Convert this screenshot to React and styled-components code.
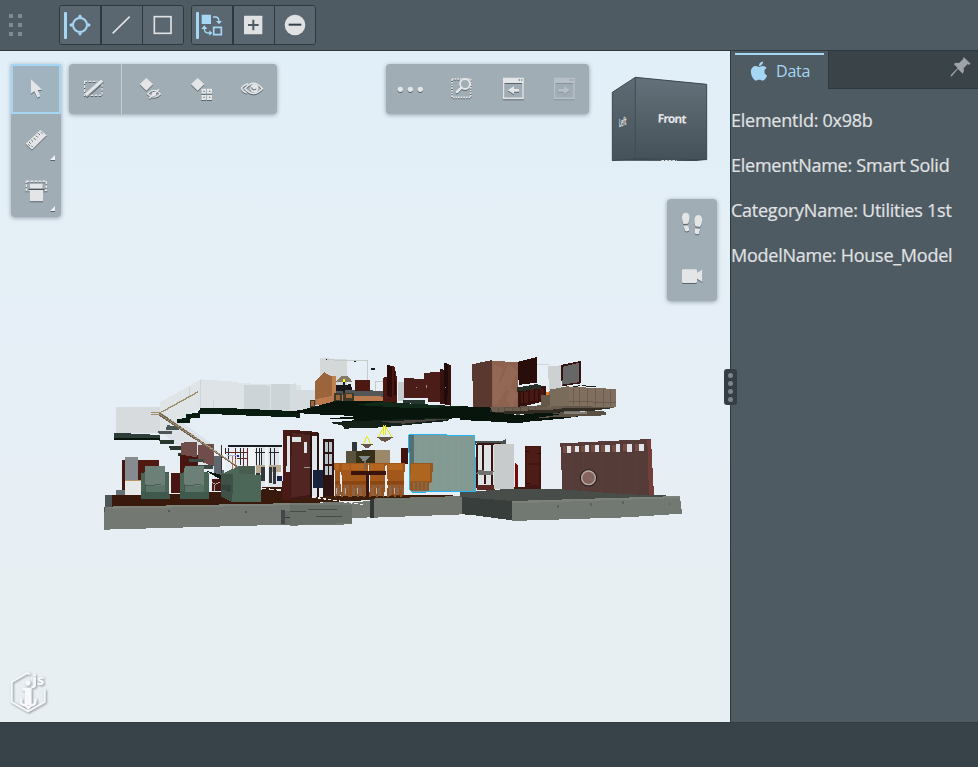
import React from "react";
import styled, { createGlobalStyle, css } from "styled-components";
import { FaApple } from "react-icons/fa";

const GlobalStyle = createGlobalStyle`
  * { box-sizing: border-box; }
  body { margin: 0; overflow: hidden; font-family: "Open Sans", "Noto Sans", sans-serif; }
`;

const accent = "#a5d7f5";
const light = "#dfe1e3";

const Page = styled.div`
  width: 978px;
  height: 767px;
  display: flex;
  flex-direction: column;
  background: #4f5b63;
  color: ${light};
`;

const Header = styled.header`
  height: 51px;
  flex: none;
  display: flex;
  align-items: flex-start;
  padding: 5px 0 0 9px;
  border-bottom: 1px solid #2f383d;
  background: #4f5b63;
`;

const DragHandle = styled.div`
  display: grid;
  grid-template-columns: 4px 4px;
  grid-auto-rows: 4px;
  gap: 5px;
  margin: 9px 37px 0 0;
  width: 13px;
`;

const HandleDot = styled.span`
  background: #818a90;
`;

const ButtonGroup = styled.div`
  display: flex;
  width: 125px;
  height: 40px;
  margin-right: 7px;
  border: 1px solid #2f383d;
  border-radius: 3px;
  overflow: hidden;
`;

const HeaderButton = styled.button`
  position: relative;
  width: 41px;
  height: 38px;
  padding: 0;
  border: 0;
  border-left: 1px solid #2f383d;
  background: #5b6770;
  display: flex;
  align-items: center;
  justify-content: center;
  color: ${(p) => (p.$active ? accent : light)};
  &:first-child { border-left: 0; border-right: 1px solid #2f383d; }
  ${(p) =>
    p.$active &&
    css`
      &::before {
        content: "";
        position: absolute;
        left: 4px;
        top: 6px;
        width: 3px;
        height: 27px;
        border-radius: 1px;
        background: ${accent};
      }
    `}
`;

const Body = styled.div`
  height: 671px;
  display: flex;
`;

const Viewport = styled.main`
  position: relative;
  width: 730px;
  height: 671px;
  overflow: hidden;
  background: linear-gradient(#e1eff8 0, #e4eff6 25%, #e6eef6 50%, #e8eff2 90%);
`;

const SceneSvg = styled.svg`
  position: absolute;
  inset: 0;
  width: 730px;
  height: 671px;
`;

const Overlay = styled.div`
  position: relative;
  height: 671px;
  padding: 13px 13px 0 11px;
  display: flex;
  align-items: flex-start;
`;

const Widget = styled.div`
  flex: none;
  display: flex;
  flex-direction: ${(p) => (p.$vertical ? "column" : "row")};
  gap: ${(p) => p.$gap || 0}px;
  width: ${(p) => p.$w}px;
  height: ${(p) => p.$h}px;
  margin-left: ${(p) => p.$left || 0}px;
  background: #a0adb5;
  border-radius: ${(p) => (p.$flatTop ? "0 0 4px 4px" : "4px")};
  box-shadow: 0 1px 4px rgba(50, 65, 80, 0.45);
`;

const ToolButton = styled.button`
  position: relative;
  flex: none;
  width: ${(p) => p.$w || 50}px;
  height: ${(p) => p.$h || 50}px;
  padding: 0;
  border: ${(p) => (p.$selected ? `2px solid ${accent}` : 0)};
  background: ${(p) => (p.$selected ? "#a2b3c0" : "transparent")};
  opacity: ${(p) => (p.$disabled ? 0.35 : 1)};
  color: #e3e5e6;
  display: flex;
  align-items: center;
  justify-content: center;
`;

const Expand = styled.i`
  position: absolute;
  right: 6px;
  bottom: 5px;
  border-left: 5px solid transparent;
  border-bottom: 5px solid #eef0f1;
  filter: drop-shadow(0 1px 0 #56616a);
`;

const Divider = styled.div`
  width: 1px;
  margin-right: 2px;
  background: #c6d0d6;
`;

const RightColumn = styled.div`
  margin-left: 23px;
  width: 105px;
  height: 237px;
  display: flex;
  flex-direction: column;
  justify-content: space-between;
  align-items: flex-end;
`;

const CubeSvg = styled.svg`
  display: block;
  width: 97px;
  height: 88px;
  margin: 12px 9px 0 0;
`;

const IconSvg = styled.svg`
  display: block;
  width: 26px;
  height: 26px;
  flex: none;
  overflow: visible;
  filter: ${(p) => (p.$flat ? "none" : "drop-shadow(0 1px 0 #59636b)")};
`;

const Logo = styled.svg`
  position: absolute;
  left: 0;
  bottom: -8px;
  width: 60px;
  height: 60px;
  filter: drop-shadow(1px 1px 1px rgba(60, 70, 80, 0.55));
`;

const Panel = styled.aside`
  position: relative;
  width: 248px;
  border-left: 1px solid #2f383d;
  background: #4f5b63;
`;

const TabBar = styled.div`
  display: flex;
  height: 38px;
`;

const Tab = styled.div`
  position: relative;
  width: 97px;
  display: flex;
  align-items: center;
  gap: 6px;
  padding: 2px 0 0 17px;
  color: ${accent};
  font-size: 16px;
  letter-spacing: -0.2px;
  &::before {
    content: "";
    position: absolute;
    left: 4px;
    right: 4px;
    top: 2px;
    height: 2px;
    background: ${accent};
  }
`;

const TabFill = styled.div`
  flex: 1;
  height: 38px;
  background: #394348;
  border-left: 1px solid #2f383d;
  border-bottom: 1px solid #2f383d;
  display: flex;
  justify-content: flex-end;
  padding: 6px 6px 0 0;
`;

const PinSvg = styled.svg`
  width: 22px;
  height: 22px;
`;

const Properties = styled.div`
  padding-top: 9px;
`;

const Property = styled.div`
  height: 45px;
  line-height: 45px;
  font-size: 18px;
  letter-spacing: -0.25px;
  white-space: nowrap;
  color: #e0e2e3;
  -webkit-text-stroke: 0.2px #e0e2e3;
`;

const Grip = styled.div`
  position: absolute;
  left: -7.5px;
  top: 318px;
  width: 13px;
  height: 36px;
  border-radius: 3px;
  background: #343e44;
  display: flex;
  flex-direction: column;
  align-items: center;
  justify-content: center;
  gap: 3px;
`;

const GripDot = styled.span`
  width: 5px;
  height: 5px;
  border-radius: 50%;
  background: #7b868c;
`;

const Footer = styled.footer`
  height: 45px;
  background: #384349;
  border-top: 1px solid #323c41;
`;

/* Icons are drawn round the origin, three units to a pixel. */
const Icon = ({ children, flat }) => (
  <IconSvg viewBox="-39 -39 78 78" $flat={flat} fill="currentColor">
    {children}
  </IconSvg>
);

const s = (width = 5) => ({ fill: "none", stroke: "currentColor", strokeWidth: width });

const SnapIcon = () => (
  <Icon flat>
    <circle r="21" {...s(6)} />
    <path d="M-31-3l8-3v12l-8-3zM31-3l-8-3v12l8-3zM-3-31l-3 8h12l-3-8zM-3 31l-3-8h12l-3 8z" />
  </Icon>
);
const LineIcon = () => <Icon><path d="M-28 25L23-25" {...s(5)} /></Icon>;
const SquareIcon = () => <Icon><rect x="-26" y="-25" width="50" height="50" {...s(5)} /></Icon>;
const ReplaceIcon = () => (
  <Icon flat>
    <path d="M-31-31h28v28h-28z" />
    <path d="M5 7h23v22h-23z" {...s(5)} />
    <path d="M3-24h7q11 0 11 14v4M-23 6v5q0 13 13 13h8" {...s(4)} />
    <path d="M12-12h18l-9 10zM-32 12h18l-9-11zM-8 16l9 8-9 8z" />
  </Icon>
);
const PlusIcon = () => (
  <Icon>
    <rect x="-30" y="-28" width="55" height="56" rx="2" />
    <path d="M-2-16v32M-18 0h32" stroke="#4f5b63" strokeWidth="6" />
  </Icon>
);
const MinusIcon = () => (
  <Icon>
    <circle r="31" />
    <path d="M-19-1h38" stroke="#343e44" strokeWidth="6" />
  </Icon>
);
const CursorIcon = () => <Icon><path d="M-15-29v43l10-7 9 19 9-4-8-18 13-2z" /></Icon>;
const RulerIcon = () => (
  <Icon>
    <path d="M-31 11l44-41 19 16-44 43z" />
    <path d="M-21 6l5 5M-14 0l5 5M-7-6l6 6M0-13l5 5M7-20l5 5M15-23l4 4M-23 13l4 4M-14 17l4 4" stroke="#59636b" strokeWidth="3" />
  </Icon>
);
const SectionIcon = () => (
  <Icon>
    <path d="M-29-29h60v27h-60z" {...s(5)} strokeDasharray="9 3" />
    <path d="M-18-22h38v15h-38zM-19-3h40v34h-40z" />
    <path d="M-23-5h49" stroke="#3e484f" strokeWidth="3" />
  </Icon>
);
const ClearIcon = () => (
  <Icon>
    <path d="M-31-23h52v42h-52z" {...s(4)} strokeDasharray="8 4" />
    <path d="M-28 20L20-25" stroke="#a0adb5" strokeWidth="14" />
    <path d="M-24 22L25-20" stroke="#6d7880" strokeWidth="3" />
    <path d="M-28 18L21-25" {...s(9)} />
  </Icon>
);
const HideIcon = () => (
  <Icon>
    <path d="M-31-14l20-19 20 19-20 19z" />
    <path d="M-7 15q18-22 38 0q-19 19-38 0z" {...s(4)} />
    <circle cx="12" cy="15" r="7" />
    <path d="M-3 28L27 1" {...s(5)} />
  </Icon>
);
const IsolateIcon = () => (
  <Icon>
    <path d="M-30-14l20-19 20 19-20 19z" />
    <path d="M1-1h15v15H1zM18-1h15v15H18zM1 18h15v15H1zM18 18h15v15H18z" />
    <path d="M7 5h4v4H7zM24 5h4v4h-4zM7 23h4v4H7zM24 23h4v4h-4z" fill="#76828a" />
  </Icon>
);
const EyeIcon = () => (
  <Icon>
    <path d="M-21-1q25-32 52 0q-27 29-52 0zM-12-16q-36 14-4 28" {...s(5)} />
    <circle cx="7" cy="-2" r="13" />
    <path d="M-1-5q1 12 14 5" fill="none" stroke="#59636b" strokeWidth="3" />
  </Icon>
);
const MoreIcon = () => (
  <Icon><circle cx="-32" cy="1" r="8" /><circle cx="-2" cy="1" r="8" /><circle cx="28" cy="1" r="8" /></Icon>
);
const WindowAreaIcon = () => (
  <Icon>
    <path d="M-30-30h56v55h-56z" {...s(5)} strokeDasharray="5 3" />
    <circle cx="9" cy="-15" r="15" fill="#a0adb5" stroke="currentColor" strokeWidth="6" />
    <path d="M-2-4L-15 9" {...s(8)} strokeLinecap="round" />
  </Icon>
);
const ViewIcon = ({ forward }) => (
  <Icon>
    <path d="M-30-33h62v15h-62z" />
    <path d="M-28-31h58v59h-58z" {...s(5)} />
    <path d="M17-27h4M24-27h4" stroke="#76828a" strokeWidth="4" />
    <path d={forward ? "M-17 0h17v-9l17 13-17 12V8h-17z" : "M18 0H3v-9L-16 4 3 16V8h15z"} />
  </Icon>
);
const WalkIcon = () => (
  <Icon>
    <path d="M-20-37q12-1 13 14q0 11-5 19l-14 1q-5-13-4-22q1-11 10-12zM-25 3l14-1 3 14q-5 5-13 2zM20-30q11 2 11 16q-1 12-7 20l-14-2q-4-12-3-20q2-14 13-14zM9 11l15 2-3 14q-9 3-13-3z" />
  </Icon>
);
const CameraIcon = () => <Icon><path d="M-27-20h38q4 0 4 4v6L31-19v37L15 8v9q0 4-4 4h-38q-3 0-3-4v-33q0-4 3-4z" /></Icon>;

const Chair = ({ x, y = 0 }) => (
  <g transform={`translate(${x} ${y})`}>
    <path d="M3 22l13-4h70l3 82H3z" fill="#40594d" />
    <path d="M16 0h58v51l11 7v20H18V53h-6z" fill="#6c8078" />
    <path d="M18 58q24 6 56-1v22H18z" fill="#5c736a" />
    <path d="M3 22h12v54H3zM74 22h14v55H74z" fill="#4a6556" />
    <path d="M18 58l16 1 15-3h15" fill="none" stroke="#354d43" strokeWidth="2" />
  </g>
);

const DiningChair = ({ x, w = 52 }) => (
  <g transform={`translate(${x} 339)`}>
    <path d={`M4 55h${w - 8}v44H4z`} fill="#6b3410" opacity=".75" />
    <path d={`M0 0h${w}l-3 55H4z`} fill="#a2581b" />
    <path d={`M4 2h${w - 9}v20H4z`} fill="#b4651f" />
    <path d={`M3 54h${w - 6}v13H3z`} fill="#8a4712" />
    {[7, 17, 28, 38, 47].filter((v) => v < w - 3).map((v, i) => (
      <path key={v} d={`M${v} 62l${i % 2 ? 3 : -3} ${i % 2 ? 34 : 40}`} stroke="#98531d" strokeWidth="5" />
    ))}
    <path d={`M${w / 2 - 3} 74v20`} stroke="#b9b3a6" strokeWidth="3" />
  </g>
);

const WestWing = () => (
  <g transform="translate(100 350) scale(.33333)" shapeRendering="crispEdges">
    <path d="M183 168l120-80 78 5 50 7 171 5v80l-225-11h-76l-22 12-28 14-20 18H183z" fill="#dde3e6" />
    <path d="M48 170h135v80H48z" fill="#d7dbde" />
    <path d="M181 156v91l108-70 14-89z" fill="#dfe4e7" />
    <path d="M183 245l58-32 100 72v70l-40-7z" fill="#d9dfe3" opacity=".8" />
    <path d="M431 104l80 3v78h-80zM512 101l76 2v85h-76z" fill="#cdd4d7" />
    <path d="M303 90v84M340 150v24M268 110v38" stroke="#c5ccd0" strokeWidth="2" />
    <path d="M43 248l136 7v13l-136 1z" fill="#2e3d3a" />
    <path d="M43 264h138v6H43z" fill="#07140c" />
    <path d="M301 174h77l222 10v19l-298-12-3 12-27 1-3 14-37 1v-11l25-4 2-12 34-3z" fill="#081c10" />
    <path d="M202 226l35 2v11h-40zM174 244h42v9h-38z" fill="#4b5755" />
    <path d="M178 270h44v11h-41zM207 289h43v11h-40zM234 309h42v10h-40z" fill="#28372e" />

    <path d="M67 331h47v61l-22 4-18 35H67z" fill="#451512" />
    <path d="M74 321h40v70H74z" fill="#858b8e" />
    <path d="M114 331h62v85h-62z" fill="#501912" />
    <path d="M75 393h47v41H75z" fill="#e6e9e8" />
    <path d="M75 391h50" stroke="#b79869" strokeWidth="4" />
    <path d="M48 419h26v15H48z" fill="#667077" />
    <path d="M214 370h29v58h-29zM241 314h54v114h-54z" fill="#481510" />
    <path d="M244 280l12-4h34v46l-46-8zM294 284l48-2v68l-47-18z" fill="#704c4b" />
    <path d="M212 357h29v13h-29z" fill="#e9eef0" />
    <path d="M342 318h30v58h-30z" fill="#5e686e" />
    <path d="M268 328h43v7h-43zM290 346h48v10h-48z" fill="#3c4b45" />
    <path d="M337 387h27v36h-27z" fill="#481510" />
    <path d="M337 397l10 6 12-6M343 405v18" fill="none" stroke="#aeb3b0" strokeWidth="3" />

    <path d="M362 288h183v124H483V294z" fill="#dee6ec" />
    <path d="M384 285h162v5H384z" fill="#191c20" />
    <path d="M362 286h5v90h-5z" fill="#30363b" />
    <path d="M367 291h8v70h-8zM446 291h19v110h-19zM495 290h9v119h-9zM537 290h8v90h-8z" fill="#f1f3f5" />
    <path d="M378 295v16M387 293v36M422 293v52M469 294v58M478 294v58M485 294v58M513 294v58M525 294v58M466 309h29M506 309h30" stroke="#25272c" strokeWidth="3" />
    <path d="M407 293v60M432 294v61M443 294v61M375 308h70M410 325h35" stroke="#612920" strokeWidth="3" fill="none" />
    <path d="M398 318v57M407 328v45" stroke="#b06c56" strokeWidth="4" />
    <path d="M469 346h26v22h-26zM507 346h36v20h-36z" fill="#b7aa91" />
    <path d="M469 368h11v28h-11zM484 352h11v42h-11zM508 352h8v48h-8zM518 352h10v50h-10z" fill="#33373c" />
    <path d="M381 315h34v4h-34z" fill="#aeb8c8" />
    <path d="M410 314h7v7h-7z" fill="#1b20d7" />
    <path d="M178 188l240 166M179 195l224 149" stroke="#746452" strokeWidth="5" />
    <path d="M178 186l240 166M179 193l224 149" stroke="#c6b896" strokeWidth="2" strokeDasharray="4 2" />
    <path d="M185 186l110-61M152 187h30M152 193h30" stroke="#a08d6b" strokeWidth="4" />

    <path d="M37 434l80 2 368-16v-8h62l50 8v55L37 471z" fill="#38190c" />
    <path d="M15 434h21v37l-4 30-20 3V470h4z" fill="#4e5554" />
    <path d="M14 470l586-11v64L12 539z" fill="#737872" />
    <path d="M15 470l585-11v6L38 476z" fill="#7d827b" />
    <path d="M544 482h60v42h-60z" fill="#656b64" />
    <path d="M544 480h12v42h-12z" fill="#41474a" />
    <path d="M556 502h44" stroke="#343a37" strokeWidth="3" />
    <path d="M205 480h6v6h-6zM435 484h6v6h-6z" fill="#505852" />
    <Chair x={120} y={348} />
    <Chair x={238} y={348} />
    <path d="M317 362l47 28v-15z" fill="#0a1710" />
    <path d="M363 371l13-4 41-19h49v26h17v81H395l-32-16z" fill="#4c6657" />
    <path d="M363 371l36 2-2 82-34-16z" fill="#3d5146" />
    <path d="M417 348h49v25h-49z" fill="#465d50" />
    <path d="M367 404l27 3-3 20-26-10z" fill="#35433e" />
    <path d="M549 240h51v211h-53z" fill="#4a1a17" />
    <path d="M562 258h12v108h-15zM576 258h24v16h-24z" fill="#dce4e8" />
    <path d="M485 415l62 6" stroke="#eee" strokeWidth="4" strokeDasharray="14 8" />
    <path d="M530 377h17v15h-17z" fill="#142346" />
  </g>
);

const CentreWing = () => (
  <g transform="translate(290 350) scale(.33333)" shapeRendering="crispEdges">
    <path d="M0 103l18-3v20l65-1v54l-83 9z" fill="#d5dcdf" />
    <path d="M90 24l81 4v85l-81-3z" fill="#d4d8d9" />
    <path d="M108 28l60 5h65v92M256 127V95h25" fill="none" stroke="#c5cacb" strokeWidth="3" />
    <path d="M107 26h5v5h-5zM191 33h7v4h-7zM243 54h12v6h-12z" fill="#171b20" />
    <path d="M139 116h46v4h47l63 6v16l-155-4z" fill="#535657" />
    <path d="M137 106l45-3 5 17-48 3z" fill="#19151c" />
    <path d="M195 90h44v33h-44z" fill="#4b1812" />
    <path d="M75 94l18-16 9-12 19 12 17-1v72l-62 15z" fill="#9b643a" />
    <path d="M125 77h13v72l-10 3z" fill="#c08150" />
    <path d="M76 148l61-13 66 2 110 4v15l-234 9z" fill="#bc7b4e" />
    <path d="M60 150h15v24H60zM132 130h25v25h-25zM160 129h33v24h-33z" fill="#3f3929" />
    <path d="M64 154h7v14h-7zM138 136h13v13h-13zM169 133h16v11h-16z" fill="#a0683c" />
    <path d="M154 78h20l13 18h-49z" fill="#867a6b" />
    <path d="M160 97h6v31h-6z" fill="#171a14" /><path d="M160 88h5v8h-5z" fill="#ff0" />
    <path d="M279 83l14-3V45l20 4 8 34v75l-42-3z" fill="#4a1813" />
    <path d="M292 44l14 5v92l-14-2zM313 53l7 80-8 8z" fill="#2c0a08" />
    <path d="M323 95h20v57h-20z" fill="#c6cbcd" />
    <path d="M342 84l61 3V69l57-5v92h-45v-12h-73z" fill="#4a1d19" />
    <path d="M451 57l14 3V38l18 8v121l-33-6z" fill="#371310" />
    <path d="M462 38l13 5-3 118-9-1z" fill="#210b0a" />
    <path d="M379 110v4M411 105v8M464 112h4" stroke="#a09170" strokeWidth="3" />
    <path d="M338 150l67 1v12l-67-4z" fill="#26372f" />
    <path d="M546 45l54-12v138h-50z" fill="#5b3f39" />

    <path d="M0 184l32-4 53-13 54-15 119 1 180 14 130 8 52-4v31l-122 3-204 10-36 2H128l-9-12 90-7-95-3-114-7z" fill="#07150d" />
    <path d="M60 205l150 4-90 9-58-6z" fill="#e6eef6" />
    <path d="M118 218l176-9 189-6-9 10-92 9-104 10-115 4-7-10z" fill="#152219" />
    <path d="M267 215l171-8h47l-145 14z" fill="#4b4540" />
    <path d="M264 155l280 16-187 3-160-9z" fill="#102919" />

    <path d="M0 241l57 2 29 5v197L0 450z" fill="#401916" />
    <path d="M6 249l54 7v179l-58 8z" fill="#512522" />
    <path d="M6 262h28v13h17v35h-8v-34H6z" fill="#dce3e7" />
    <path d="M67 257h15v183H67z" fill="#dfe6eb" />
    <path d="M61 248h6v194h-6zM81 248h5v194h-5z" fill="#28100d" />
    <path d="M99 267h33v178H99z" fill="#2c1311" />
    <path d="M106 276h8v31h-8zM118 276h8v31h-8zM106 313h8v28h-8zM118 313h8v28h-8zM106 348h8v27h-8zM118 348h8v27h-8z" fill="#bac4cd" />
    <path d="M68 359h31v54H68z" fill="#18243b" />
    <path d="M42 353h18" stroke="#9a9c9b" strokeWidth="3" />
    <path d="M333 294h21v48h-21z" fill="#40130f" />
    <path d="M168 303h57v38h-57z" fill="#59523c" />
    <path d="M225 300h75v44h-75z" fill="#9b876a" />
    <path d="M198 304l28-4h29v40h-57z" fill="#373018" />
    <path d="M186 276h15v26h-15z" fill="#30363a" />
    <path d="M0 449l132-12 358-1v12L245 450 0 462z" fill="#3c1c0b" />
    <path d="M0 460l240-6v48l-54 3v18l-86 2-100 2z" fill="#747972" />
    <path d="M0 465h186v54L0 525z" fill="#686e68" />
    <path d="M0 486h47M55 478h87M78 499h79" stroke="#343a37" strokeWidth="2" />
    <path d="M240 446l280-8v55l-268 10h-12z" fill="#727870" />
    <path d="M240 448h12v55h-12z" fill="#303735" />
    <path d="M516 440l84 15v43l-84-5z" fill="#3b413e" />
    <path d="M67 441l78 12 75 11" fill="none" stroke="#eee" strokeWidth="4" strokeDasharray="10 6" />
    <DiningChair x={132} w={21} /><DiningChair x={152} w={34} />
    <DiningChair x={178} w={56} /><DiningChair x={236} w={51} />
    <DiningChair x={289} w={56} />
    <path d="M183 362h106v13H183zM228 375h9v65h-9z" fill="#39130d" />
    <path d="M207 318h33l-13 15h-9z" fill="#818a89" /><path d="M222 333h6v25h-6z" fill="#72675c" />
    <path d="M283 228l-17 33M287 228l17 33M281 226v30M288 226v30M229 262l-8 20M233 262l9 20M231 258v6" fill="none" stroke="#e8e900" strokeWidth="3" />
    <path d="M261 262h48l-15 10-8 4-11-4zM213 283h36l-14 10h-9z" fill="#66564a" />
    <path d="M356 254h115l83 4v61l3 3v102H410l-1 3-45-1-4-7V308h-5z" fill="#829a91" />
    <path d="M357 254h15v86h-15z" fill="#526f72" />
    <path d="M360 339h69l-3 56-8 5v20h-58z" fill="#96571f" />
    <path d="M364 341h55v53h-59z" fill="#ad651f" />
    <path d="M362 396h56v26h-56z" fill="#7d6b4c" />
    <path d="M365 397v24M377 397v22M390 397v24M402 397v22M413 397v24" stroke="#9e5219" strokeWidth="6" />
    <path d="M390 257v78M408 257v78M440 257v163M462 257v163M485 257v163M507 257v163M530 257v163" stroke="#92a69b" strokeWidth="2" opacity=".4" />
    <path d="M356 254h115v3h83v64l3 3v100H410l-1 3-45-1-4-7V307h-4z" fill="none" stroke="#23b5f4" strokeWidth="3" />
  </g>
);

const EastWing = () => (
  <g transform="translate(460 350) scale(.33333)" shapeRendering="crispEdges">
    <path d="M36 43l60-13v142l-55-1z" fill="#59382f" />
    <path d="M95 32l80 5v141l-80-6z" fill="#8d6350" />
    <path d="M98 43l31 12-11 36 20 27-26 44-14 3zM146 43l28 22-23 44 23 30-19 32-17-23 9-24-24-29z" fill="#a0735e" opacity=".35" />
    <path d="M174 35l57-14v77l-55 7z" fill="#280d0a" />
    <path d="M231 43h37M248 45h19" stroke="#d0d5d7" strokeWidth="3" />
    <path d="M265 49l39-3v75h-38z" fill="#cdd1d1" />
    <path d="M303 45l60-12v67l-58 9z" fill="#351310" />
    <path d="M309 50l47-11v58l-49 7z" fill="#666766" />
    <path d="M172 111l85-3v45l-83 20z" fill="#35110e" />
    <path d="M183 126h20v33h-20zM211 121h24v31h-24zM239 117h14v29h-14z" fill="#4a1814" />
    <path d="M192 126v35M223 121v31" stroke="#260b09" strokeWidth="3" />
    <path d="M171 113l60-11 15 6-4 8-71 9z" fill="#292e27" />
    <path d="M98 174l144-8 110-2 115 9-110 10-184 11-76-7z" fill="#5f5449" />
    <path d="M42 186l55-8 155-1 146-4-45 10-155 10-91 1z" fill="#322c24" />
    <path d="M0 169l89 2v15l88 9 102-10h118v8l-88 13-115 10-15 4-95-6-84-4z" fill="#07150d" />
    <path d="M90 171l84 3 90-12 66 2-40 14-193 8z" fill="#6b5d4f" />
    <path d="M115 174v11M135 174v11M158 174v11M182 172v11M205 170v10M228 167v11" stroke="#51443a" strokeWidth="2" />
    <path d="M160 188l170-13 138-2-75 10-130 6z" fill="#322c24" />
    <path d="M327 110l140 7v55l-142-5z" fill="#806f5f" />
    <path d="M269 119l58-11v59l-63 3z" fill="#796c5a" />
    <path d="M244 136l26-4v36l-29 6z" fill="#655848" />
    <path d="M340 113v52M358 113v52M382 113v52M407 115v52M430 116v52M451 117v52M327 153l140 6" stroke="#62534a" strokeWidth="2" />
    <path d="M266 189l145-6 26 2v11l-127 5-82 3 73-11z" fill="#5b5044" />
    <path d="M311 184h70v8h-70z" fill="#aeb0ae" opacity=".5" />
    <path d="M367 107l40 4M340 110l20-3" fill="none" stroke="#24211d" strokeWidth="3" />
    <path d="M258 127h8v7h-8z" fill="#e17a20" />

    <path d="M45 272h82l12-5v17H45z" fill="#48514e" />
    <path d="M48 280h55v137H48z" fill="#dee3e6" />
    <path d="M51 281v133M70 280v84M76 369v34M96 280v125M52 282h70M50 409h53" fill="none" stroke="#38130f" strokeWidth="5" />
    <path d="M48 373l8-13 45 4-4 12z" fill="#70716c" /><path d="M52 405h52v14H52z" fill="#5b2921" />
    <path d="M162 411h35v8h-35z" fill="#3c1c0b" />
    <path d="M102 281h60v136h-60z" fill="#c7cbcc" />
    <path d="M166 340l8 5v66h-8z" fill="#7b0707" />
    <path d="M195 287h48v130h-47z" fill="#441613" />
    <path d="M202 291h36v48h-36zM202 345h36v60h-36z" fill="#4e1c17" />
    <path d="M196 306h10M232 310h11M199 402h10" stroke="#240e0c" strokeWidth="3" />
    <path d="M301 280l271-13 4 168H308z" fill="#573b39" />
    <path d="M562 269h11l9 165-15 1z" fill="#743f38" />
    <path d="M304 307h257v124H308z" fill="#563c39" />
    {[310, 334, 364, 394, 424, 456, 490, 526].map((x, i) => (
      <g key={x}>
        <path d={`M${x} ${289 - i}h${18 + i}v${19 + i * .4}h-${18 + i}z`} fill="#754d45" />
        <path d={`M${x + 11} ${288 - i}h${12 + i * .5}v${20 + i * .5}h-${12 + i * .5}z`} fill="#dfe5e8" />
      </g>
    ))}
    <path d="M337 313v112M372 313v118M426 313v118M483 313v118M530 313v118" stroke="#62433f" strokeWidth="2" opacity=".4" />
    <g shapeRendering="auto">
      <circle cx="385.5" cy="383.5" r="24" fill="#83645f" stroke="#271f20" strokeWidth="4" />
      <circle cx="385.5" cy="383.5" r="20.5" fill="none" stroke="#bba9a3" strokeWidth="4" />
    </g>
    <path d="M0 427l141-10 168 1 174 14 178 6-1 4-503 13L0 442z" fill="#484d49" />
    <path d="M6 441l151 12-1 58-60-8-90-12z" fill="#383e3b" />
    <path d="M156 453l504-15 6 53-166 11-344 11z" fill="#727872" />
    <path d="M156 453l504-15v6L158 460z" fill="#7c817a" />
    <path d="M291 466h6v7h-6zM389 460h6v7h-6zM486 454h6v7h-6zM626 459h5v6h-5z" fill="#5b625d" />
    <path d="M0 256h44v62l3 3v104H0z" fill="#829a91" />
    <path d="M0 256h44v64l3 3v102H0" fill="none" stroke="#23b5f4" strokeWidth="3" />
  </g>
);

const Scene = () => (
  <SceneSvg viewBox="0 51 730 671">
    <WestWing />
    <CentreWing />
    <EastWing />
  </SceneSvg>
);

const ViewCube = () => (
  <CubeSvg viewBox="723 78 291 264">
    <defs>
      <linearGradient id="cubeFront" x2="0" y2="1"><stop stopColor="#64717a" /><stop offset="1" stopColor="#455158" /></linearGradient>
      <linearGradient id="cubeLeft" x2="0" y2="1"><stop stopColor="#5e6b74" /><stop offset="1" stopColor="#465259" /></linearGradient>
    </defs>
    <path d="M727 127l69-45v246l-69 4z" fill="url(#cubeLeft)" />
    <path d="M796 82l214 21v227l-214-3z" fill="url(#cubeFront)" />
    <path d="M727 332l69-6 214 3-30 4z" fill="#3e4a51" />
    <path d="M727 127l69-45 214 21v226l-214-3-69 6zM796 82v244" fill="none" stroke="#3c474e" strokeWidth="3" />
    <text x="863" y="219" fontFamily="Open Sans" fontWeight="700" fontSize="36" textLength="87" fill="#e4e6e8" transform="rotate(2 906 207)">Front</text>
    <text transform="translate(747 232) skewY(-20) scale(.33 1)" fontFamily="Open Sans" fontWeight="700" fontSize="34" fill="#e4e6e8">Left</text>
    <path d="M874 332h46" stroke="#e3e6e8" strokeWidth="4" strokeDasharray="8 3" />
  </CubeSvg>
);

const properties = [
  ["ElementId", "0x98b"],
  ["ElementName", "Smart Solid"],
  ["CategoryName", "Utilities 1st"],
  ["ModelName", "House_Model"],
];

export default function App() {
  return (
    <Page>
      <GlobalStyle />
      <Header>
        <DragHandle>{[0, 1, 2, 3, 4, 5].map((i) => <HandleDot key={i} />)}</DragHandle>
        <ButtonGroup>
          <HeaderButton $active><SnapIcon /></HeaderButton>
          <HeaderButton><LineIcon /></HeaderButton>
          <HeaderButton><SquareIcon /></HeaderButton>
        </ButtonGroup>
        <ButtonGroup>
          <HeaderButton $active><ReplaceIcon /></HeaderButton>
          <HeaderButton><PlusIcon /></HeaderButton>
          <HeaderButton><MinusIcon /></HeaderButton>
        </ButtonGroup>
      </Header>
      <Body>
        <Viewport>
          <Scene />
          <Overlay>
            <Widget $vertical $gap={1} $w={50} $h={153} $flatTop>
              <ToolButton $selected><CursorIcon /></ToolButton>
              <ToolButton><RulerIcon /><Expand /></ToolButton>
              <ToolButton><SectionIcon /><Expand /></ToolButton>
            </Widget>
            <Widget $w={208} $h={50} $left={8}>
              <ToolButton $w={52}><ClearIcon /></ToolButton>
              <Divider />
              <ToolButton $w={51}><HideIcon /></ToolButton>
              <ToolButton $w={51}><IsolateIcon /></ToolButton>
              <ToolButton $w={51}><EyeIcon /></ToolButton>
            </Widget>
            <Widget $w={203} $h={50} $gap={1} $left={109}>
              <ToolButton><MoreIcon /></ToolButton>
              <ToolButton><WindowAreaIcon /></ToolButton>
              <ToolButton><ViewIcon /></ToolButton>
              <ToolButton $disabled><ViewIcon forward /></ToolButton>
            </Widget>
            <RightColumn>
              <ViewCube />
              <Widget $vertical $w={50} $h={102}>
                <ToolButton $h={51}><WalkIcon /></ToolButton>
                <ToolButton $h={51}><CameraIcon /></ToolButton>
              </Widget>
            </RightColumn>
          </Overlay>
          <Logo viewBox="0 0 180 180" fill="none" stroke="#f6f8f9" strokeWidth="6">
            <path d="M90 12L82 9 35 36v60l49 28 50-28V58" />
            <circle cx="84" cy="39" r="8" fill="#f6f8f9" stroke="none" />
            <path d="M67 58h24v46M78 58v46M63 86v10q0 9 14 10l8 8 8-8q13-1 13-10V86" strokeWidth="8" />
            <path d="M80 58h11v48H80z" fill="#f6f8f9" stroke="none" />
            <text x="97" y="45" fill="#f6f8f9" stroke="none" fontFamily="Open Sans" fontWeight="800" fontSize="43">js</text>
          </Logo>
        </Viewport>
        <Panel>
          <TabBar>
            <Tab><FaApple size={22} />Data</Tab>
            <TabFill>
              <PinSvg viewBox="0 0 66 66" fill="#9da3a6">
                <path d="M41 0l21 20-5 3-5-1-11 12q3 10-3 16L24 36 6 57l-4 2 1-6 20-20L11 21q7-6 16-3l12-11z" />
              </PinSvg>
            </TabFill>
          </TabBar>
          <Properties>
            {properties.map(([name, value]) => (
              <Property key={name}>{`${name}: ${value}`}</Property>
            ))}
          </Properties>
          <Grip>{[0, 1, 2, 3].map((i) => <GripDot key={i} />)}</Grip>
        </Panel>
      </Body>
      <Footer />
    </Page>
  );
}
